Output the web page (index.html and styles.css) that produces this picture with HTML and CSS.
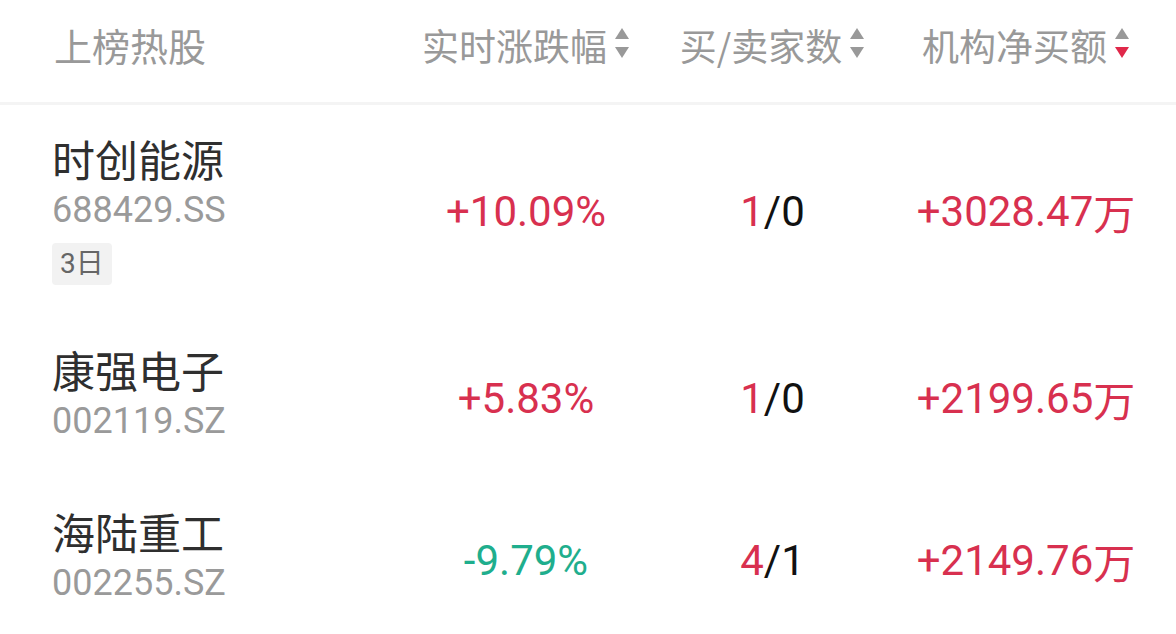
FILE: index.html
```html
<!DOCTYPE html>
<html lang="zh-CN">
<head>
<meta charset="utf-8">
<title>上榜热股</title>
<link rel="stylesheet" href="styles.css">
</head>
<body>
<div class="table">
  <div class="head row-grid">
    <div class="h-name">上榜热股</div>
    <div class="h-col"><span>实时涨跌幅</span><svg class="sort" viewBox="0 0 16 34" width="16" height="34"><polygon points="1,13 8,2 15,13" class="tri"/><polygon points="1,21 15,21 8,32" class="tri"/></svg></div>
    <div class="h-col"><span>买/卖家数</span><svg class="sort" viewBox="0 0 16 34" width="16" height="34"><polygon points="1,13 8,2 15,13" class="tri"/><polygon points="1,21 15,21 8,32" class="tri"/></svg></div>
    <div class="h-col"><span>机构净买额</span><svg class="sort" viewBox="0 0 16 34" width="16" height="34"><polygon points="1,13 8,2 15,13" class="tri"/><polygon points="1,21 15,21 8,32" class="tri active"/></svg></div>
  </div>

  <div class="row row-grid">
    <div class="stock">
      <div class="name">时创能源</div>
      <div class="code">688429.SS</div>
      <div class="tag">3日</div>
    </div>
    <div class="cell num up">+10.09%</div>
    <div class="cell num"><span class="up">1</span>/0</div>
    <div class="cell num up">+3028.47<span class="unit">万</span></div>
  </div>

  <div class="row row-grid">
    <div class="stock">
      <div class="name">康强电子</div>
      <div class="code">002119.SZ</div>
    </div>
    <div class="cell num up">+5.83%</div>
    <div class="cell num"><span class="up">1</span>/0</div>
    <div class="cell num up">+2199.65<span class="unit">万</span></div>
  </div>

  <div class="row row-grid">
    <div class="stock">
      <div class="name">海陆重工</div>
      <div class="code">002255.SZ</div>
    </div>
    <div class="cell num down">-9.79%</div>
    <div class="cell num"><span class="up">4</span>/1</div>
    <div class="cell num up">+2149.76<span class="unit">万</span></div>
  </div>
</div>
</body>
</html>
```
FILE: styles.css
```css
html, body {
  margin: 0;
  padding: 0;
  background: #ffffff;
}
body {
  font-family: "Noto Sans CJK SC", "Noto Sans", sans-serif;
  color: #333333;
}
.table {
  width: 1176px;
}
.row-grid {
  display: grid;
  grid-template-columns: 371px 206px 287px 220px;
  padding: 0 40px 0 52px;
}
.head {
  box-sizing: border-box;
  height: 105px;
  border-bottom: 3px solid #f4f4f4;
  align-items: start;
  padding-top: 19px;
  font-size: 37px;
  line-height: 52px;
  color: #999999;
}
.h-name {
  padding-left: 2px;
  font-size: 38px;
}
.h-col {
  display: flex;
  justify-content: center;
  align-items: center;
  gap: 7px;
  white-space: nowrap;
}
.sort {
  display: block;
  flex-shrink: 0;
  margin-top: -4px;
}
.tri {
  fill: #999999;
}
.tri.active {
  fill: #e0284a;
}
.row {
  padding-top: 27px;
  padding-bottom: 31px;
}
.stock {
  display: flex;
  flex-direction: column;
  align-items: flex-start;
}
.name {
  font-size: 43px;
  line-height: 52px;
  color: #2f2f2f;
}
.code {
  font-family: Roboto, "Noto Sans CJK SC", sans-serif;
  font-size: 36px;
  line-height: 52px;
  color: #9a9a9a;
}
.tag {
  margin-top: 7px;
  height: 42px;
  line-height: 42px;
  padding: 0 8px;
  background: #f2f2f2;
  border-radius: 4px;
  font-family: Roboto, "Noto Sans CJK SC", sans-serif;
  font-size: 28px;
  color: #666666;
}
.cell {
  display: flex;
  align-items: center;
  justify-content: center;
  padding-top: 6px;
  white-space: nowrap;
}
.num {
  font-family: Roboto, "Noto Sans CJK SC", sans-serif;
  font-size: 42px;
  color: #111111;
}
.up {
  color: #d8304f;
}
.down {
  color: #1fae8d;
}
.unit {
  font-family: "Noto Sans CJK SC", sans-serif;
  font-size: 42px;
}
```
